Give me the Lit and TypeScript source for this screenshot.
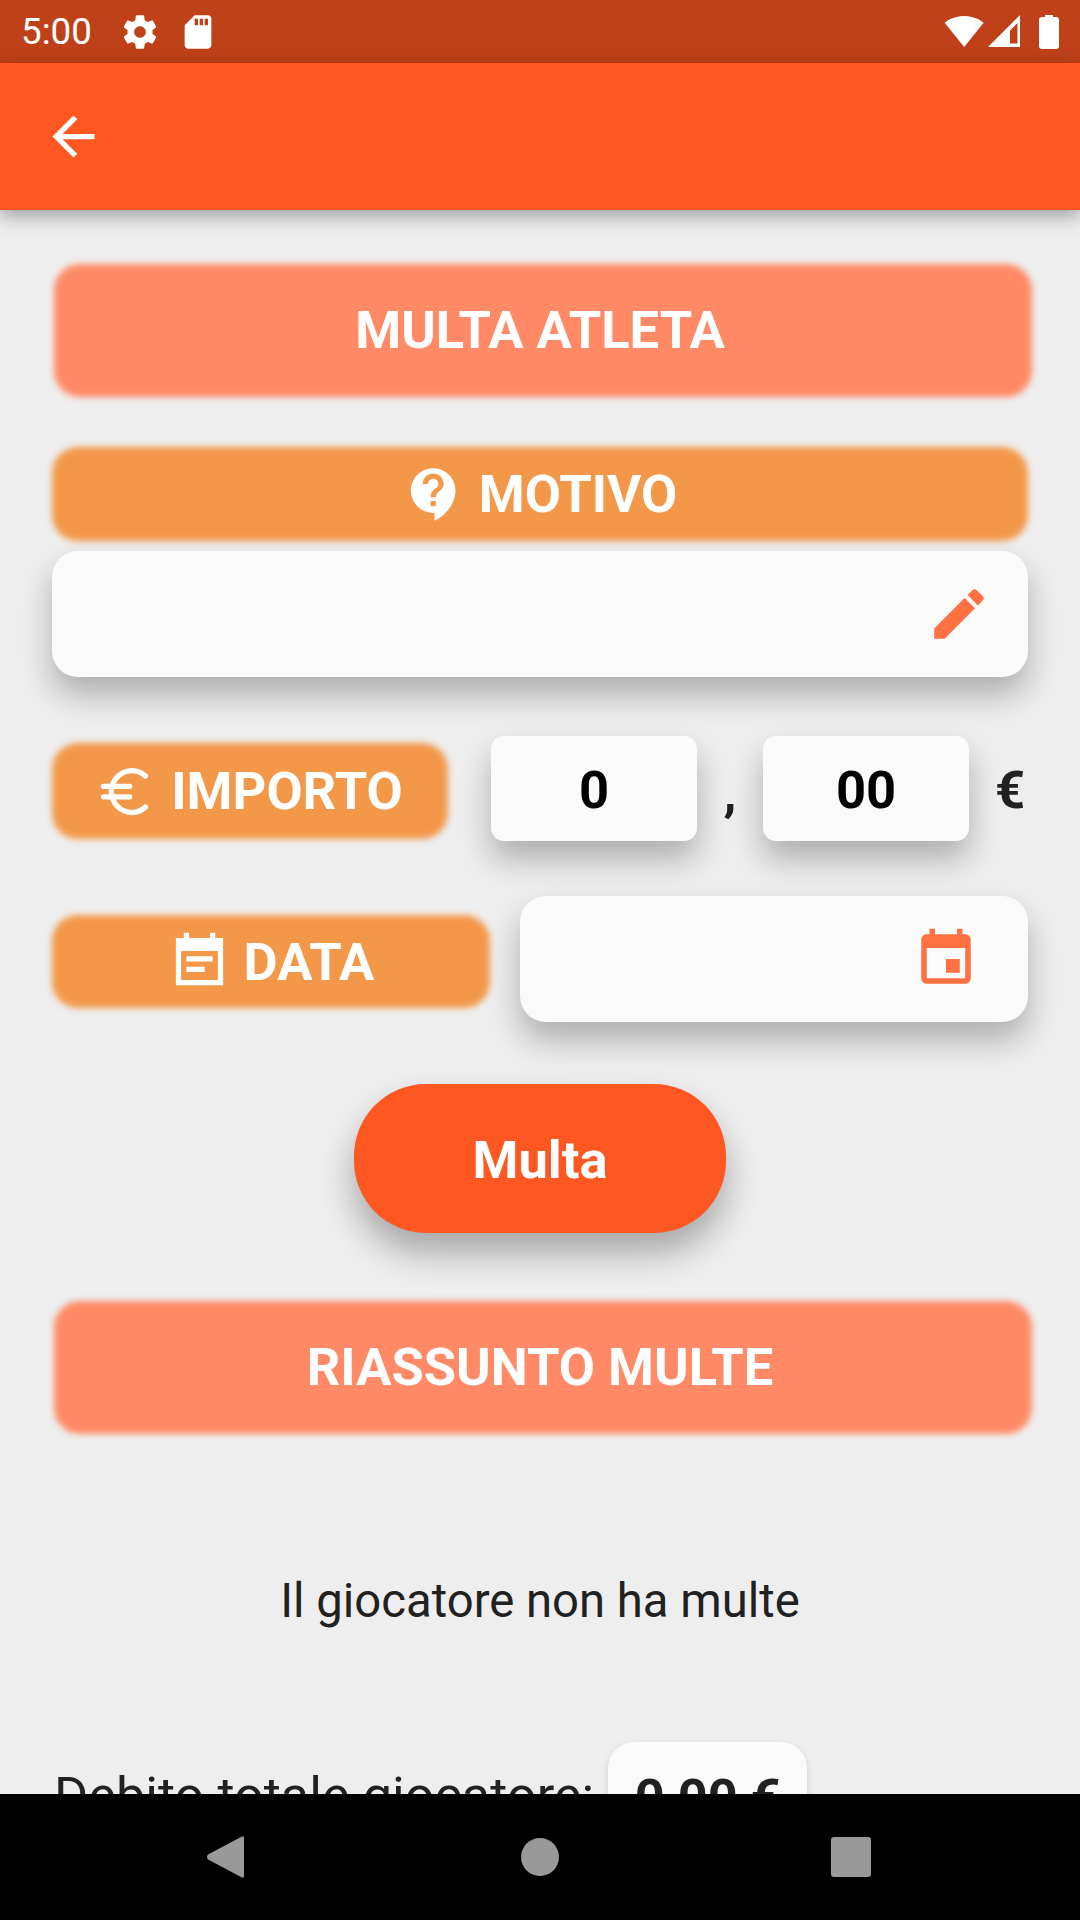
import { html, css, LitElement, svg } from 'lit';
import { customElement } from 'lit/decorators.js';

const icon = (d: string, cls = '') => html`<svg class="icon ${cls}" viewBox="0 0 24 24"><path d=${d}></path></svg>`;

const SETTINGS = 'M19.43 12.98c.04-.32.07-.64.07-.98s-.03-.66-.07-.98l2.11-1.65c.19-.15.24-.42.12-.64l-2-3.46c-.12-.22-.39-.3-.61-.22l-2.49 1c-.52-.4-1.08-.73-1.69-.98l-.38-2.65C14.46 2.18 14.25 2 14 2h-4c-.25 0-.46.18-.49.42l-.38 2.65c-.61.25-1.17.59-1.69.98l-2.49-1c-.23-.09-.49 0-.61.22l-2 3.46c-.13.22-.07.49.12.64l2.11 1.65c-.04.32-.07.65-.07.98s.03.66.07.98l-2.11 1.65c-.19.15-.24.42-.12.64l2 3.46c.12.22.39.3.61.22l2.49-1c.52.4 1.08.73 1.69.98l.38 2.65c.03.24.24.42.49.42h4c.25 0 .46-.18.49-.42l.38-2.65c.61-.25 1.17-.59 1.69-.98l2.49 1c.23.09.49 0 .61-.22l2-3.46c.12-.22.07-.49-.12-.64l-2.11-1.65zM12 15.5c-1.93 0-3.5-1.57-3.5-3.5s1.57-3.5 3.5-3.5 3.5 1.57 3.5 3.5-1.57 3.5-3.5 3.5z';
const SD = 'M18 2h-8L4.02 8 4 20c0 1.1.9 2 2 2h12c1.1 0 2-.9 2-2V4c0-1.1-.9-2-2-2zm-6 6h-2V4h2v4zm3 0h-2V4h2v4zm3 0h-2V4h2v4z';
const WIFI = 'M12 21.5L23.6 7C23.1 6.6 18.8 3 12 3S.9 6.6.4 7z';
const BACK = 'M20 11H7.83l5.59-5.59L12 4l-8 8 8 8 1.41-1.41L7.83 13H20v-2z';
const HELP = 'M11.5 2C6.81 2 3 5.81 3 10.5S6.81 19 11.5 19h.5v3c4.86-2.34 8-7 8-11.5C20 5.81 16.19 2 11.5 2zm1 14.5h-2v-2h2v2zm0-3.5h-2c0-3.25 3-3 3-5 0-1.1-.9-2-2-2s-2 .9-2 2h-2c0-2.21 1.79-4 4-4s4 1.79 4 4c0 2.5-3 2.75-3 5z';
const EDIT = 'M3 17.25V21h3.75L17.81 9.94l-3.75-3.75L3 17.25zM20.71 7.04c.39-.39.39-1.02 0-1.41l-2.34-2.34c-.39-.39-1.02-.39-1.41 0l-1.83 1.83 3.75 3.75 1.83-1.83z';
const NOTE = 'M17 10H7v2h10v-2zm4-7h-3V1h-2v2H8V1H6v2H3v18h18V3zm-2 16H5V8h14v11zm-5-5H7v2h7v-2z';
const EVENT = 'M17 12h-5v5h5v-5zM16 1v2H8V1H6v2H5c-1.11 0-1.99.9-1.99 2L3 19c0 1.1.89 2 2 2h14c1.1 0 2-.9 2-2V5c0-1.1-.9-2-2-2h-1V1h-2zm3 18H5V8h14v11z';

@customElement('app-root')
export class AppRoot extends LitElement {
	static styles = css`
		:host {
			display: flex;
			flex-direction: column;
			width: 1080px;
			height: 1920px;
			overflow: hidden;
			background: #eeeeee;
			font-family: Roboto, "Liberation Sans", sans-serif;
			color: #212121;
		}
		.icon { display: block; fill: currentColor; flex: none; }

		.status {
			flex: none;
			height: 63px;
			display: flex;
			align-items: center;
			background: #bf4119;
			color: #fff;
			padding-left: 21px;
			font-size: 36.75px;
		}
		.status .icon { width: 40px; height: 40px; }
		.time { width: 99px; }
		.sd { margin-left: 18px; }
		.status-right { width: 118px; height: 40px; margin-left: auto; margin-right: 18px; }

		.bar {
			flex: none;
			position: relative;
			z-index: 2;
			height: 147px;
			display: flex;
			align-items: center;
			padding-left: 42px;
			background: #ff5722;
			color: #fff;
			box-shadow: 0 6px 18px rgba(0, 0, 0, .34);
		}
		.bar .icon { width: 63px; height: 63px; }

		.content {
			flex: 1;
			min-height: 0;
			overflow: hidden;
			display: flex;
			flex-direction: column;
			padding: 53px 52px 0;
		}

		.soft {
			position: relative;
			isolation: isolate;
			display: flex;
			align-items: center;
			justify-content: center;
			gap: 13px;
			flex: none;
			color: #fff;
			font-size: 52.5px;
			font-weight: 700;
		}
		.soft::before {
			content: '';
			position: absolute;
			inset: 1px 0;
			z-index: -1;
			border-radius: 26px;
			background: #f39849;
			filter: blur(3px);
		}
		.soft .icon { width: 63px; height: 63px; }
		.title { width: 978px; height: 135px; margin-left: 2px; padding: 0 6px 2px 0; box-sizing: border-box; }
		.title::before { background: #ff8a65; }

		.motivo { width: 976px; height: 96px; margin-top: 48px; }

		.field {
			flex: none;
			display: flex;
			align-items: center;
			justify-content: flex-end;
			height: 126px;
			background: #fafafa;
			border-radius: 26px;
			box-shadow: 0 18px 32px rgba(0, 0, 0, .27);
			color: #ff7043;
		}
		.field .icon { width: 66px; height: 66px; }
		.field-motivo { width: 976px; margin-top: 9px; padding-right: 36px; box-sizing: border-box; }

		.row { display: flex; align-items: flex-start; flex: none; }
		.row-importo { margin-top: 59px; }
		.row-data { margin-top: 55px; }
		.importo { width: 396px; height: 98px; margin-top: 6px; padding-right: 4px; box-sizing: border-box; gap: 15px; }
		.data { width: 438px; height: 95px; margin-top: 18px; }
		.field-data { width: 508px; margin-left: 30px; padding-right: 49px; box-sizing: border-box; }

		.num {
			flex: none;
			width: 206px;
			height: 105px;
			padding-top: 3px;
			box-sizing: border-box;
			display: flex;
			align-items: center;
			justify-content: center;
			background: #fafafa;
			border-radius: 13px;
			box-shadow: 0 18px 32px rgba(0, 0, 0, .27);
			color: #000;
			font-size: 52.5px;
			font-weight: 700;
		}
		.num-first { margin-left: 43px; }
		.sep {
			flex: none;
			height: 105px;
			padding-top: 3px;
			box-sizing: border-box;
			display: flex;
			align-items: center;
			justify-content: center;
			font-size: 52.5px;
			font-weight: 700;
		}
		.comma { width: 66px; padding-top: 6px; }
		.euro { width: 82px; }

		.action {
			flex: none;
			align-self: center;
			width: 372px;
			height: 149px;
			padding-top: 3px;
			box-sizing: border-box;
			margin-top: 62px;
			display: flex;
			align-items: center;
			justify-content: center;
			background: #ff5722;
			border-radius: 72px;
			box-shadow: 0 20px 34px rgba(0, 0, 0, .3);
			color: #fff;
			font-size: 52.5px;
			font-weight: 700;
		}
		.summary { margin-top: 67px; }

		.empty {
			flex: none;
			margin-top: 134px;
			text-align: center;
			font-size: 47.25px;
			line-height: 64px;
		}

		.debt {
			flex: none;
			display: flex;
			align-items: flex-start;
			margin-top: 109px;
			margin-left: 2px;
			font-size: 52.25px;
		}
		.debt-label { padding-top: 24px; line-height: 62px; }
		.debt-value {
			width: 199px;
			height: 126px;
			margin-left: 14px;
			padding-top: 26px;
			line-height: 62px;
			box-sizing: border-box;
			text-align: center;
			font-weight: 700;
			background: #fafafa;
			border-radius: 26px;
			box-shadow: 0 2px 6px rgba(0, 0, 0, .12);
		}

		.nav {
			flex: none;
			position: relative;
			z-index: 3;
			height: 126px;
			background: #000;
		}
		.nav svg { display: block; width: 1080px; height: 126px; fill: #999; }
	`;

	render() {
		return html`
			<div class="status">
				<span class="time">5:00</span>
				${icon(SETTINGS)}
				${icon(SD, 'sd')}
				<svg class="status-right" viewBox="0 0 118 40">
					<g transform="translate(0 -1) scale(1.68)"><path d=${WIFI} fill="#fff"></path></g>
					${svg`<path fill-rule="evenodd" fill="#fff" d="M44 35 L76 3 V35 Z M66 31.500 H73.500 V11 L66 18.500 Z"></path>
					<path fill="#fff" d="M98 5 H101 V3 H109 V5 H112 Q115 5 115 8 V34 Q115 37 112 37 H98 Q95 37 95 34 V8 Q95 5 98 5 Z"></path>`}
				</svg>
			</div>
			<div class="bar">${icon(BACK)}</div>
			<div class="content">
				<div class="soft title">MULTA ATLETA</div>

				<div class="soft motivo">${icon(HELP)}<span>MOTIVO</span></div>
				<div class="field field-motivo">${icon(EDIT)}</div>

				<div class="row row-importo">
					<div class="soft importo">
						<svg class="icon" viewBox="0 0 24 24" fill="none" stroke="currentColor" stroke-width="2" stroke-linecap="round">
							<path fill="none" d="M20 6.100C18.600 4.800 16.900 4 15 4c-4.400 0-8 3.600-8 8s3.600 8 8 8c1.900 0 3.600-.8 5-2.100M4 10h10M4 14h10"></path>
						</svg>
						<span>IMPORTO</span>
					</div>
					<div class="num num-first">0</div>
					<div class="sep comma">,</div>
					<div class="num">00</div>
					<div class="sep euro">€</div>
				</div>

				<div class="row row-data">
					<div class="soft data">${icon(NOTE)}<span>DATA</span></div>
					<div class="field field-data">${icon(EVENT)}</div>
				</div>

				<div class="action">Multa</div>

				<div class="soft title summary">RIASSUNTO MULTE</div>

				<div class="empty">Il giocatore non ha multe</div>

				<div class="debt">
					<span class="debt-label">Debito totale giocatore:</span>
					<span class="debt-value">0,00 €</span>
				</div>
			</div>
			<div class="nav">
				<svg viewBox="0 0 1080 126">
					<path d="M244 44 V82 Q244 85 241 83 L208 65.500 Q206 63 208 60.500 L241 43 Q244 41 244 44 Z"></path>
					<circle cx="540" cy="63" r="19"></circle>
					<rect x="831" y="43" width="40" height="40" rx="3"></rect>
				</svg>
			</div>
		`;
	}
}
